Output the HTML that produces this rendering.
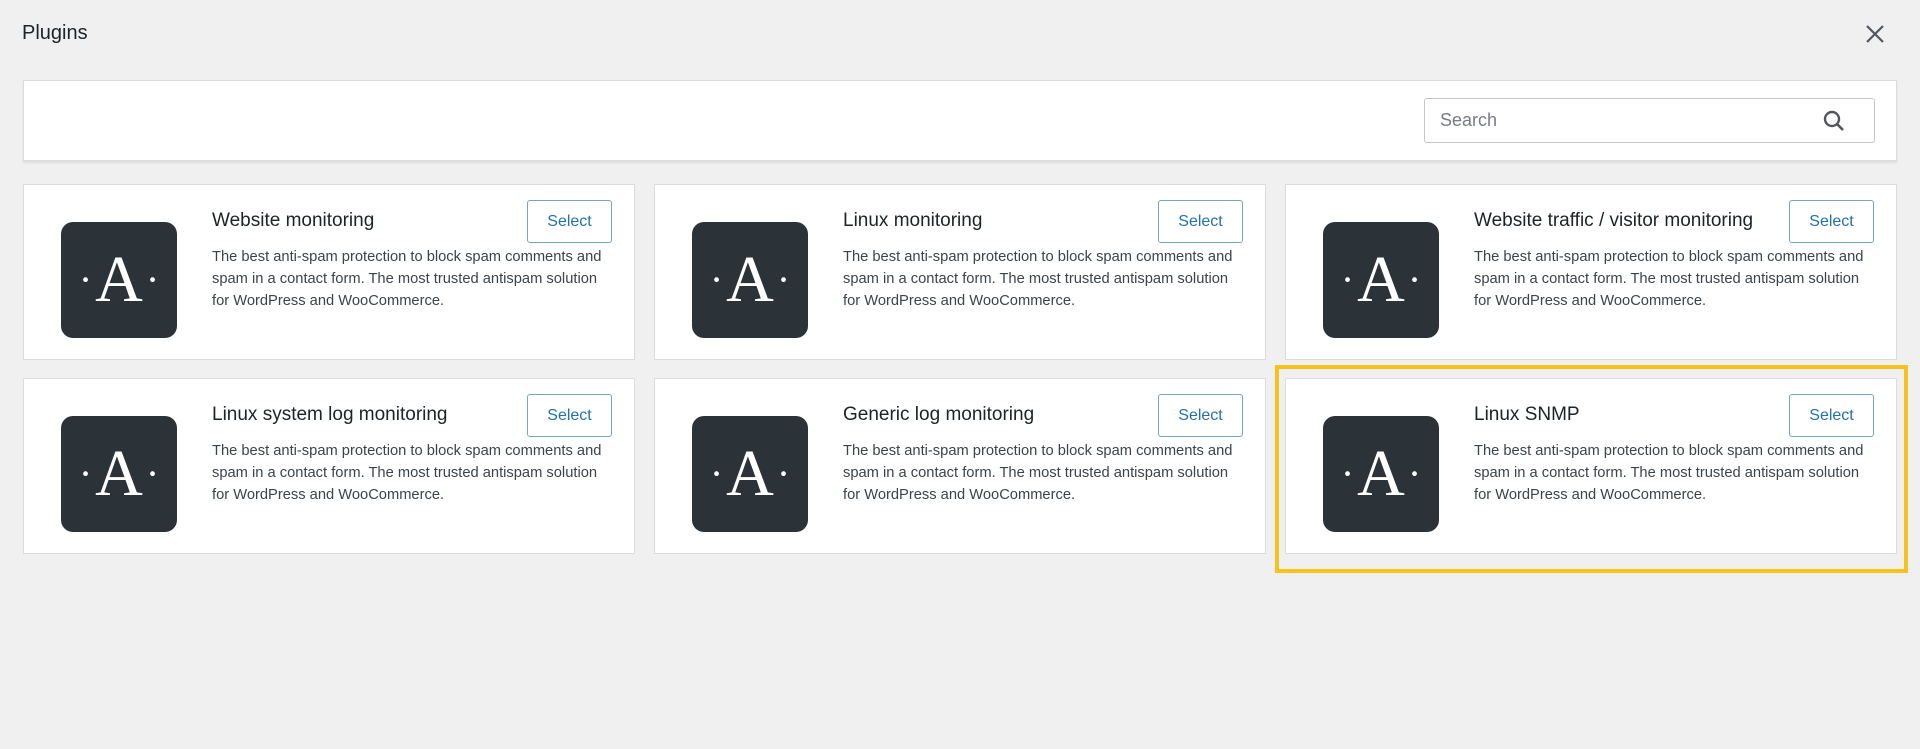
<!DOCTYPE html>
<html><head><meta charset="utf-8"><style>
*{box-sizing:border-box;margin:0;padding:0}
body{width:1920px;height:749px;background:#f0f0f1;font-family:"Liberation Sans",Arial,sans-serif;position:relative;overflow:hidden;color:#1d2327}
.title{position:absolute;left:22px;top:22px;font-size:20px;color:#1d2327}
.close{position:absolute;left:1864px;top:23px;width:22px;height:22px}
.head{position:absolute;left:23px;top:80px;width:1874px;height:81px;background:#fff;border:1px solid #dcdcde;box-shadow:0 2px 2px rgba(0,0,0,.08)}
.search{position:absolute;left:1400px;top:17px;width:451px;height:45px;border:1px solid #c3c4c7;border-radius:3px;font-size:18px;color:#787c82;padding:11px 15px}
.search svg{position:absolute;right:28px;top:10px}
.card{position:absolute;width:612px;background:#fff;border:1px solid #dcdcde}
.logo{position:absolute;left:37px;width:116px;height:116px;background:#2c3338;border-radius:12px;color:#fff;font-family:"Liberation Serif",serif;font-size:66px;text-align:center;line-height:116px}
.logo i{font-style:normal;font-size:40px;vertical-align:8px;margin:0 3px}
.name{position:absolute;left:188px;font-size:19px;color:#1d2327}
.desc{position:absolute;left:188px;width:392px;font-size:14.7px;line-height:22px;color:#3c434a}
.btn{position:absolute;left:503px;top:15px;width:85px;height:43px;border:1px solid #7aa3c2;border-radius:3px;color:#2271b1;font-size:16px;text-align:center;line-height:41px}
.hl{position:absolute;left:1275px;top:365px;width:633px;height:208px;border:4px solid #f7c21b}
</style></head><body>
<div class="title">Plugins</div>
<svg class="close" viewBox="0 0 22 22"><path d="M3 3L19 19M19 3L3 19" stroke="#50575e" stroke-width="2.2"/></svg>
<div class="head"><div class="search">Search<svg width="24" height="24" viewBox="0 0 24 24"><circle cx="10" cy="10" r="7" fill="none" stroke="#50575e" stroke-width="2.4"/><path d="M15 15L21 21" stroke="#50575e" stroke-width="2.6"/></svg></div></div>

<div class="card" style="left:23px;top:184px;height:176px"><div class="logo" style="top:37px"><i>·</i>A<i>·</i></div><div class="name" style="top:25px">Website monitoring</div><div class="btn">Select</div><div class="desc" style="top:61px">The best anti-spam protection to block spam comments and spam in a contact form. The most trusted antispam solution for WordPress and WooCommerce.</div></div>
<div class="card" style="left:654px;top:184px;height:176px"><div class="logo" style="top:37px"><i>·</i>A<i>·</i></div><div class="name" style="top:25px">Linux monitoring</div><div class="btn">Select</div><div class="desc" style="top:61px">The best anti-spam protection to block spam comments and spam in a contact form. The most trusted antispam solution for WordPress and WooCommerce.</div></div>
<div class="card" style="left:1285px;top:184px;height:176px"><div class="logo" style="top:37px"><i>·</i>A<i>·</i></div><div class="name" style="top:25px">Website traffic / visitor monitoring</div><div class="btn">Select</div><div class="desc" style="top:61px">The best anti-spam protection to block spam comments and spam in a contact form. The most trusted antispam solution for WordPress and WooCommerce.</div></div>

<div class="card" style="left:23px;top:378px;height:176px"><div class="logo" style="top:37px"><i>·</i>A<i>·</i></div><div class="name" style="top:25px">Linux system log monitoring</div><div class="btn">Select</div><div class="desc" style="top:61px">The best anti-spam protection to block spam comments and spam in a contact form. The most trusted antispam solution for WordPress and WooCommerce.</div></div>
<div class="card" style="left:654px;top:378px;height:176px"><div class="logo" style="top:37px"><i>·</i>A<i>·</i></div><div class="name" style="top:25px">Generic log monitoring</div><div class="btn">Select</div><div class="desc" style="top:61px">The best anti-spam protection to block spam comments and spam in a contact form. The most trusted antispam solution for WordPress and WooCommerce.</div></div>
<div class="card" style="left:1285px;top:378px;height:176px"><div class="logo" style="top:37px"><i>·</i>A<i>·</i></div><div class="name" style="top:25px">Linux SNMP</div><div class="btn">Select</div><div class="desc" style="top:61px">The best anti-spam protection to block spam comments and spam in a contact form. The most trusted antispam solution for WordPress and WooCommerce.</div></div>
<div class="hl"></div>
</body></html>
